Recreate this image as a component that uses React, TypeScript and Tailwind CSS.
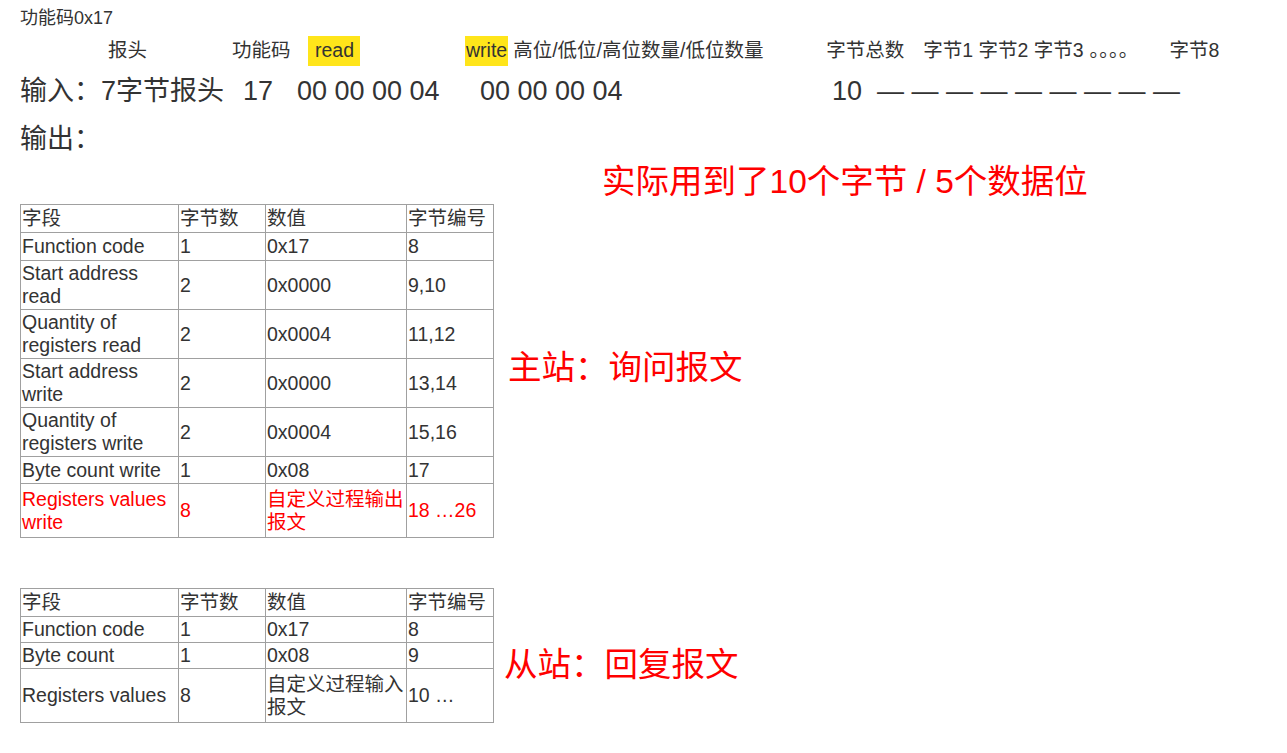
const F = { fontFamily: '"Liberation Sans", "Noto Sans CJK SC", sans-serif' };

type Row = { c: string[]; h: number; red?: boolean };

const t1: Row[] = [
  { c: ["字段", "字节数", "数值", "字节编号"], h: 28 },
  { c: ["Function code", "1", "0x17", "8"], h: 28 },
  { c: ["Start address read", "2", "0x0000", "9,10"], h: 49 },
  { c: ["Quantity of registers read", "2", "0x0004", "11,12"], h: 49 },
  { c: ["Start address write", "2", "0x0000", "13,14"], h: 49 },
  { c: ["Quantity of registers write", "2", "0x0004", "15,16"], h: 49 },
  { c: ["Byte count write", "1", "0x08", "17"], h: 27 },
  { c: ["Registers values write", "8", "自定义过程输出报文", "18 …26"], h: 54, red: true },
];

const t2: Row[] = [
  { c: ["字段", "字节数", "数值", "字节编号"], h: 28 },
  { c: ["Function code", "1", "0x17", "8"], h: 26 },
  { c: ["Byte count", "1", "0x08", "9"], h: 26 },
  { c: ["Registers values", "8", "自定义过程输入报文", "10 …"], h: 54 },
];

const widths = ["w-[158px]", "w-[87px]", "w-[141px]", "w-[87px]"];

function Table({ rows }: { rows: Row[] }) {
  return (
    <table className="border-collapse table-fixed text-[19.5px] leading-[23px] text-[#333]">
      <tbody>
        {rows.map((r, i) => (
          <tr key={i} style={{ height: r.h }} className={r.red ? "text-[#ff0000]" : ""}>
            {r.c.map((c, j) => (
              <td key={j} className={`${widths[j]} border border-[#a0a0a0] pl-[1px] pr-0 align-middle`}>
                {c}
              </td>
            ))}
          </tr>
        ))}
      </tbody>
    </table>
  );
}

export default function App() {
  return (
    <div className="w-[1287px] h-[753px] bg-white text-[#333] relative overflow-hidden" style={F}>
      <div className="pl-[20px] pt-[7px] text-[18px] leading-[22px]">功能码0x17</div>
      <div className="flex items-center mt-[9px] h-[26px] text-[19.5px] whitespace-nowrap">
        <span className="ml-[108px] w-[124px]">报头</span>
        <span className="w-[76px]">功能码</span>
        <span className="bg-[#ffe51a] px-[7px] w-[52px]">read</span>
        <span className="ml-[105px] bg-[#ffe51a] px-[1px]">write</span>
        <span className="ml-[5px] w-[313px]">高位/低位/高位数量/低位数量</span>
        <span className="w-[97px]">字节总数</span>
        <span>字节1 字节2 字节3</span>
        <span className="ml-[6px] w-[80px]">。。。。</span>
        <span>字节8</span>
      </div>
      <div className="flex items-center mt-[10px] h-[34px] text-[27px] whitespace-nowrap">
        <span className="ml-[20px] w-[223px]">输入：7字节报头</span>
        <span className="w-[54px]">17</span>
        <span className="w-[183px]">00 00 00 04</span>
        <span className="w-[352px]">00 00 00 04</span>
        <span className="w-[45px]">10</span>
        <span>— — — — — — — — —</span>
      </div>
      <div className="ml-[20px] mt-[14px] text-[27px] leading-[34px]">输出：</div>
      <div className="ml-[602px] mt-[6px] text-[33.5px] leading-[40px] text-[#ff0000]">实际用到了10个字节 / 5个数据位</div>
      <div className="flex items-center ml-[20px] mt-[2px]">
        <Table rows={t1} />
        <span className="ml-[14px] text-[33.5px] text-[#ff0000] mb-[6px]">主站：询问报文</span>
      </div>
      <div className="flex items-center ml-[20px] mt-[50px]">
        <Table rows={t2} />
        <span className="ml-[10px] text-[33.5px] text-[#ff0000] mt-[20px]">从站：回复报文</span>
      </div>
    </div>
  );
}
